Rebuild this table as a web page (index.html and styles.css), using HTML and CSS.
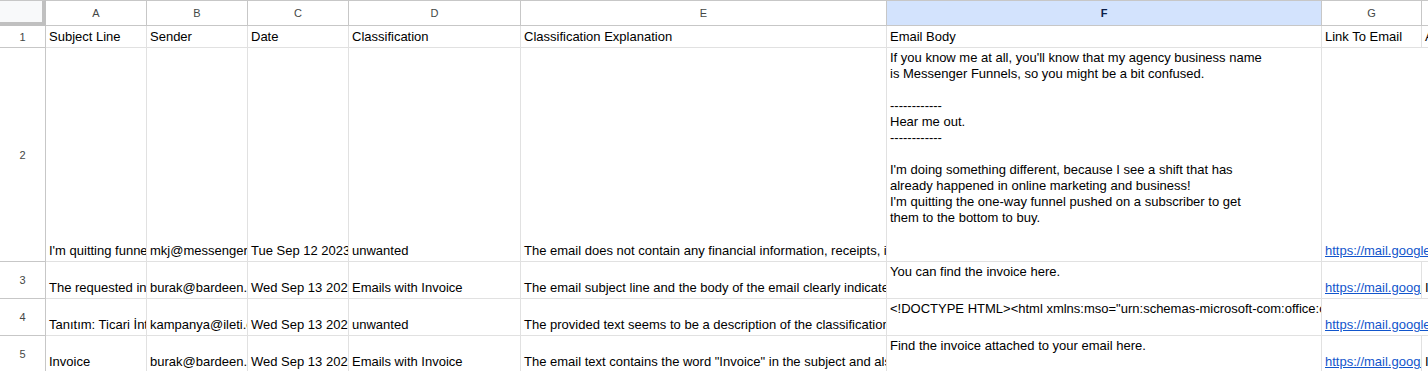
FILE: index.html
```html
<!DOCTYPE html>
<html>
<head>
<meta charset="utf-8">
<link rel="stylesheet" href="styles.css">
</head>
<body>
<div class="sheet">
  <div class="corner"></div>
  <div class="colh">A</div>
  <div class="colh">B</div>
  <div class="colh">C</div>
  <div class="colh">D</div>
  <div class="colh">E</div>
  <div class="colh sel">F</div>
  <div class="colh">G</div>
  <div class="colh">H</div>

  <div class="rowh r1">1</div>
  <div class="c r1">Subject Line</div>
  <div class="c r1">Sender</div>
  <div class="c r1">Date</div>
  <div class="c r1">Classification</div>
  <div class="c r1">Classification Explanation</div>
  <div class="c r1">Email Body</div>
  <div class="c r1">Link To Email</div>
  <div class="c r1">Attachments</div>

  <div class="rowh r2">2</div>
  <div class="c r2">I'm quitting funnels</div>
  <div class="c r2">mkj@messengerfunnels.com</div>
  <div class="c r2">Tue Sep 12 2023 21:04:11</div>
  <div class="c r2">unwanted</div>
  <div class="c r2">The email does not contain any financial information, receipts, invoices or payment details.</div>
  <div class="c r2 top body">If you know me at all, you'll know that my agency business name
is Messenger Funnels, so you might be a bit confused.

------------
Hear me out.
------------

I'm doing something different, because I see a shift that has
already happened in online marketing and business!
I'm quitting the one-way funnel pushed on a subscriber to get
them to the bottom to buy.</div>
  <div class="c r2 span2"><a href="#">https://mail.google.com/mail/u/0/#inbox</a></div>

  <div class="rowh r3">3</div>
  <div class="c r3">The requested invoice</div>
  <div class="c r3">burak@bardeen.ai</div>
  <div class="c r3">Wed Sep 13 2023 10:12:45</div>
  <div class="c r3">Emails with Invoice</div>
  <div class="c r3">The email subject line and the body of the email clearly indicate that it contains an invoice.</div>
  <div class="c r3 top">You can find the invoice here.</div>
  <div class="c r3"><a href="#">https://mail.google.com/mail/u/0/#inbox</a></div>
  <div class="c r3">Invoice.pdf</div>

  <div class="rowh r4">4</div>
  <div class="c r4">Tanıtım: Ticari İnternet</div>
  <div class="c r4">kampanya@ileti.com.tr</div>
  <div class="c r4">Wed Sep 13 2023 11:30:02</div>
  <div class="c r4">unwanted</div>
  <div class="c r4">The provided text seems to be a description of the classification task rather than an email.</div>
  <div class="c r4 top">&lt;!DOCTYPE HTML&gt;&lt;html xmlns:mso="urn:schemas-microsoft-com:office:office" xmlns:msdt="uuid"&gt;</div>
  <div class="c r4 span2"><a href="#">https://mail.google.com/mail/u/0/#inbox</a></div>

  <div class="rowh r5">5</div>
  <div class="c r5">Invoice</div>
  <div class="c r5">burak@bardeen.ai</div>
  <div class="c r5">Wed Sep 13 2023 14:20:33</div>
  <div class="c r5">Emails with Invoice</div>
  <div class="c r5">The email text contains the word "Invoice" in the subject and also mentions an attached invoice.</div>
  <div class="c r5 top">Find the invoice attached to your email here.</div>
  <div class="c r5"><a href="#">https://mail.google.com/mail/u/0/#inbox</a></div>
  <div class="c r5">Invoice.pdf</div>
</div>
</body>
</html>
```

FILE: styles.css
```css
html, body {
  margin: 0;
  padding: 0;
  background: #ffffff;
  overflow: hidden;
}

.sheet {
  display: grid;
  grid-template-columns: 46px 101px 101px 101px 172px 366px 435px 100px 120px;
  grid-template-rows: 26px 22px 214px 37px 37px 37px;
  width: 1542px;
  font-family: "Liberation Sans", Arial, sans-serif;
  font-size: 13px;
  line-height: 16px;
  color: #000000;
}

.sheet > div {
  box-sizing: border-box;
  overflow: hidden;
  white-space: nowrap;
}

.corner {
  background: #f8f9fa;
  border-top: 1px solid #c7c7c7;
  border-right: 4px solid #c0c0c0;
  border-bottom: 4px solid #c0c0c0;
}

.colh {
  border-top: 1px solid #c7c7c7;
  border-right: 1px solid #c7c7c7;
  border-bottom: 1px solid #c7c7c7;
  font-size: 11px;
  color: #444746;
  display: flex;
  align-items: center;
  justify-content: center;
  background: #ffffff;
}

.colh.sel {
  background: #d3e3fd;
  color: #0b1f4a;
  font-weight: bold;
}

.rowh {
  border-right: 1px solid #c7c7c7;
  border-bottom: 1px solid #c7c7c7;
  font-size: 11px;
  color: #444746;
  display: flex;
  align-items: center;
  justify-content: center;
}

.c {
  border-right: 1px solid #e1e1e1;
  border-bottom: 1px solid #e1e1e1;
  padding: 0 3px 2px 3px;
  display: flex;
  flex-direction: column;
  justify-content: flex-end;
}

.c.r1 {
  justify-content: center;
  padding-bottom: 0;
}

.c.top {
  justify-content: flex-start;
  padding-top: 2px;
  padding-bottom: 0;
}

.c.body {
  white-space: pre;
}

.c.span2 {
  grid-column: span 2;
}

.c a {
  color: #1155cc;
  text-decoration: underline;
}
```
